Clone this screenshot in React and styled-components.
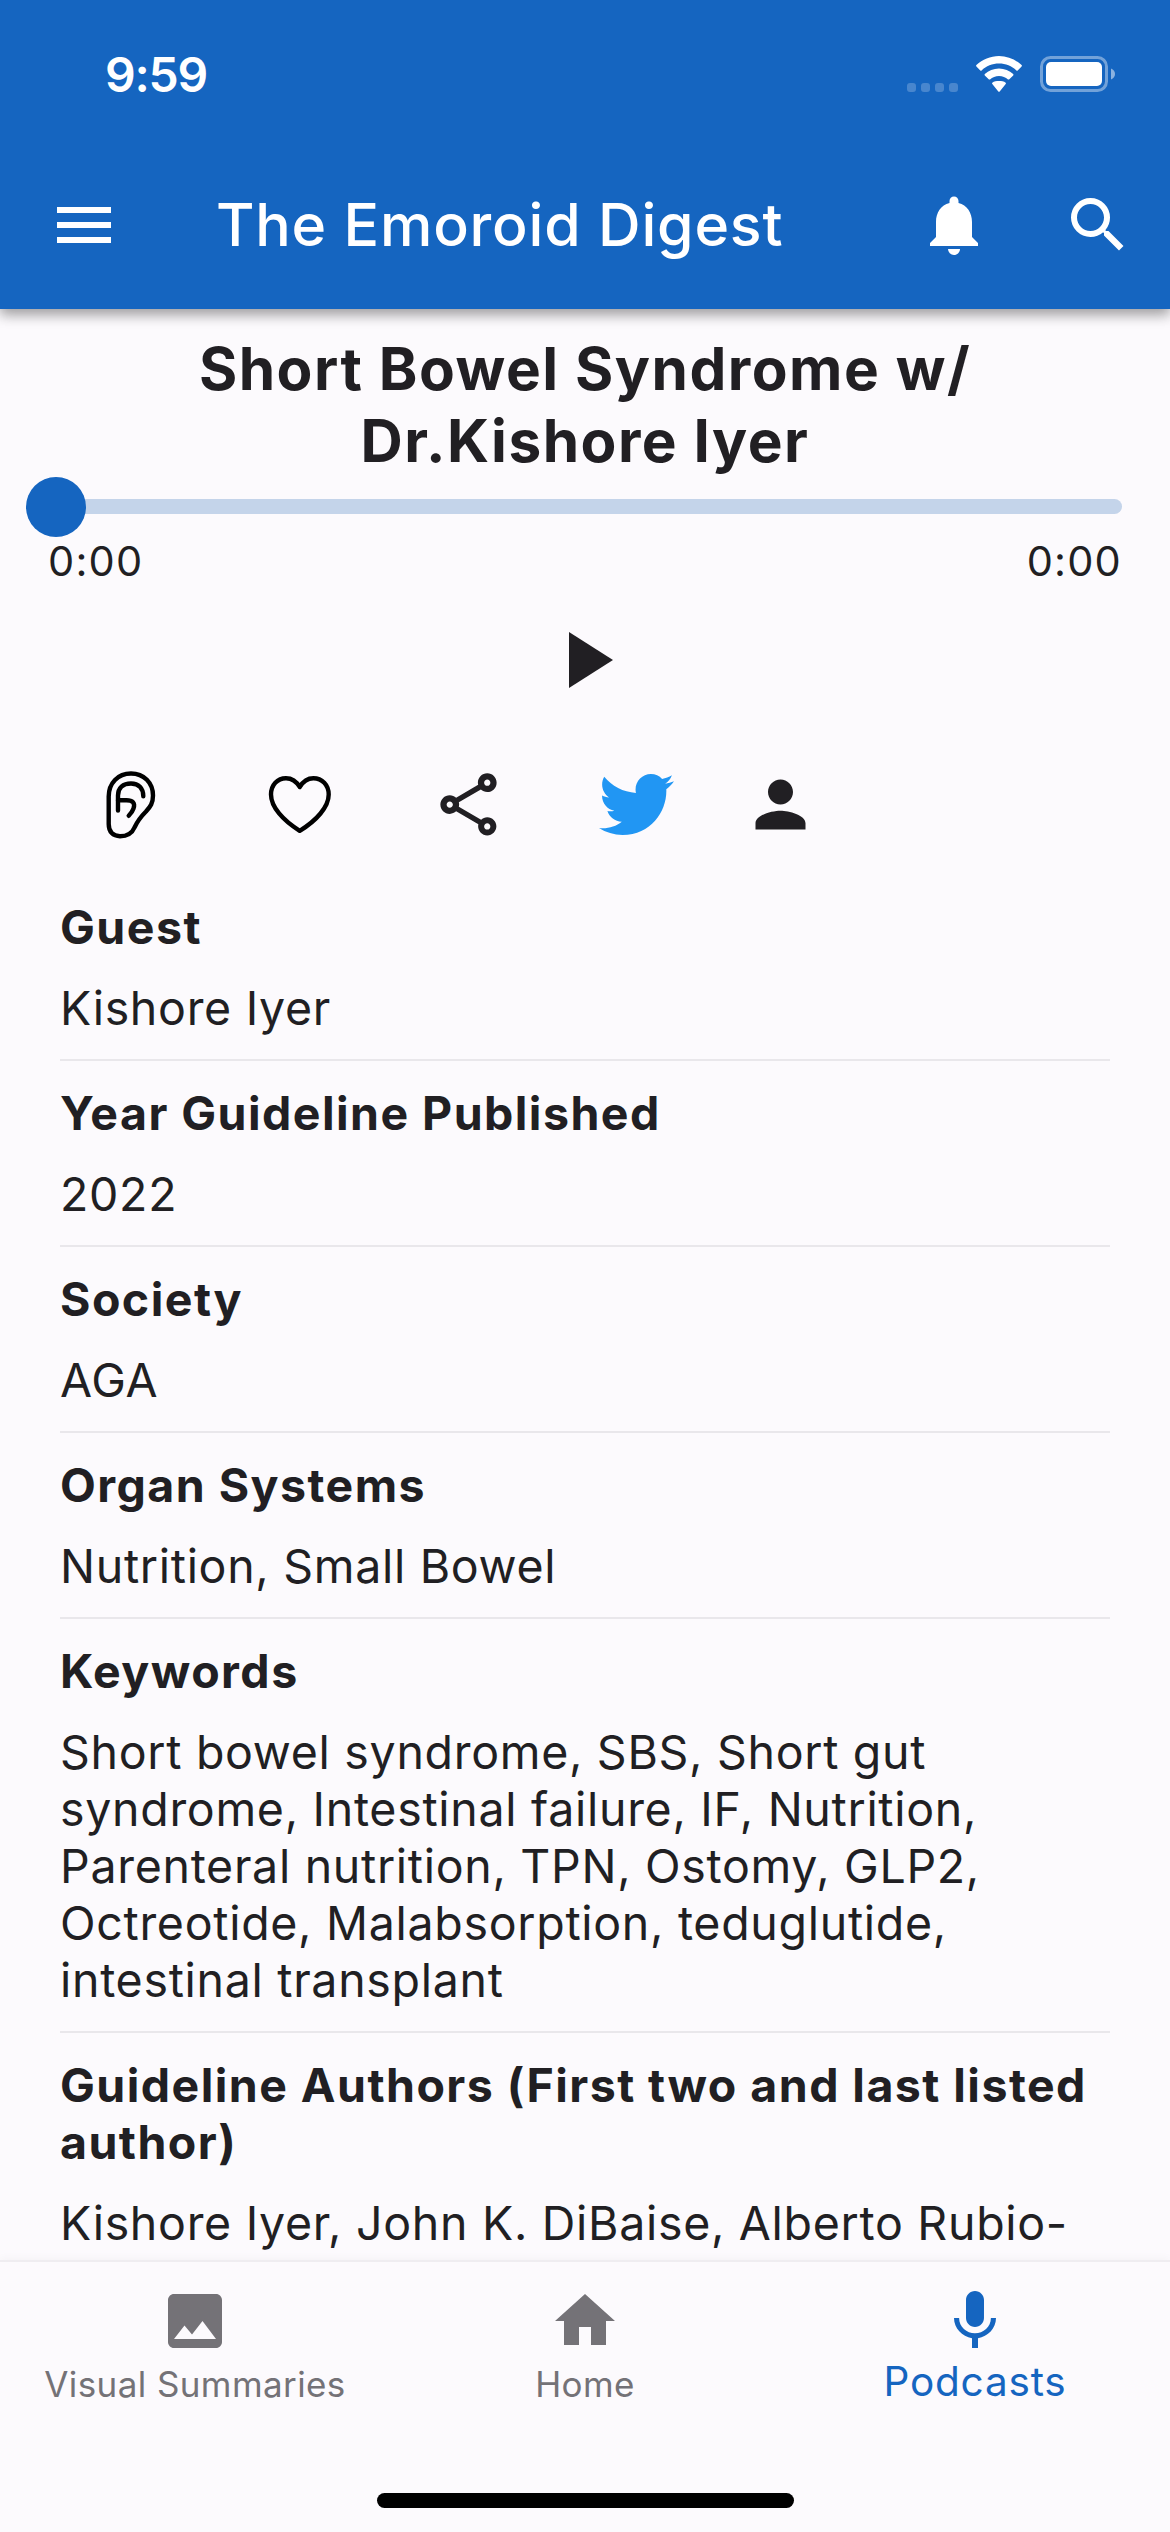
import React, { useState } from 'react'

import styled, { createGlobalStyle } from 'styled-components'

import {
  MdHome,
  MdImage,
  MdMenu,
  MdNotifications,
  MdOutlineShare,
  MdPerson,
  MdPlayArrow,
  MdSearch,
} from 'react-icons/md'
import { FaTwitter } from 'react-icons/fa'


const GlobalStyle = createGlobalStyle`
  * {
    box-sizing: border-box;
  }
  body {
    margin: 0;
    background-color: #fcfafd;
    color: #211f23;
    font-family: Inter, "Liberation Sans", sans-serif;
  }
  button {
    border: none;
    padding: 0;
    background: none;
    color: inherit;
    font: inherit;
  }
  svg {
    display: block;
    flex-shrink: 0;
  }
`

const Screen = styled.div`
  display: flex;
  flex-direction: column;
  width: 1170px;
  height: 2532px;
  overflow: hidden;
`

const Header = styled.header`
  flex-shrink: 0;
  height: 309px;
  background-color: #1565c0;
  color: white;
  box-shadow: 0 6px 12px rgba(0, 0, 0, 0.3), 0 3px 15px rgba(0, 0, 0, 0.12);
  z-index: 1;
`

const StatusBar = styled.div`
  display: flex;
  align-items: center;
  justify-content: space-between;
  height: 141px;
  padding: 7px 55px 0 105px;
`

const Clock = styled.span`
  font-size: 48px;
  font-weight: 600;
  letter-spacing: -1.2px;
`

const StatusIcons = styled.div`
  display: flex;
  align-items: center;
  gap: 17px;
`

const SignalDots = styled.div`
  display: flex;
  gap: 5px;
  margin-top: 26px;
`

const Dot = styled.i`
  width: 9px;
  height: 9px;
  border-radius: 3px;
  background-color: rgba(255, 255, 255, 0.22);
`

const AppBar = styled.div`
  display: flex;
  align-items: center;
  height: 168px;
  padding: 0 36px 0 48px;
`

const AppTitle = styled.h1`
  flex: 1;
  margin: 0 0 0 96px;
  font-size: 59px;
  font-weight: 500;
  line-height: 72px;
  letter-spacing: 0.8px;
  white-space: nowrap;
`

const AppBarActions = styled.div`
  display: flex;
  gap: 72px;
`

const Content = styled.main`
  flex: 1;
  min-height: 0;
  overflow: hidden;
`

const PodcastTitle = styled.h2`
  margin: 24px 150px 0;
  text-align: center;
  font-size: 58.5px;
  font-weight: 700;
  line-height: 72px;
  letter-spacing: 1.5px;
`

const Player = styled.section`
  display: flex;
  flex-direction: column;
  padding: 0 48px;
`

const Track = styled.div`
  display: flex;
  align-items: center;
  height: 15px;
  margin-top: 22px;
  border-radius: 8px;
  background-color: #c4d4ea;
`

const Thumb = styled.div`
  width: 60px;
  height: 60px;
  margin-left: -22px;
  border-radius: 50%;
  background-color: #1565c0;
`

const Times = styled.div`
  display: flex;
  justify-content: space-between;
  margin-top: 22px;
  font-size: 41.5px;
  line-height: 50px;
  letter-spacing: 1.2px;
`

const PlayButton = styled.button`
  align-self: center;
  margin-top: 26px;
`

const Actions = styled.div`
  display: flex;
  gap: 94px;
  margin-top: 59px;
  padding-left: 93px;
`

const ActionButton = styled.button`
  width: 75px;
  height: 75px;
  color: ${props => props.color || "#211f23"};
  &:nth-child(4) {
    margin-left: -1px;
  }
  &:last-child {
    margin-left: -25px;
  }
`

const Details = styled.div`
  padding: 33px 60px 0;
`

const Detail = styled.section`
  padding: 24px 0 22px;
  border-bottom: 2px solid #e9e7eb;
`

const DetailTitle = styled.h3`
  margin: 0 0 24px;
  font-size: 46.5px;
  font-weight: 700;
  line-height: 57px;
  letter-spacing: 1.45px;
`

const DetailText = styled.p`
  margin: 0;
  font-size: 46.5px;
  line-height: 57px;
  letter-spacing: 0.7px;
`

const BottomNav = styled.nav`
  flex-shrink: 0;
  display: grid;
  grid-template-columns: repeat(3, 1fr);
  height: 272px;
  padding-top: 23px;
  border-top: 2px solid #efedf1;
  background-color: #fcfafd;
  box-shadow: 0 -2px 8px rgba(0, 0, 0, 0.03);
`

const NavItem = styled.button`
  display: flex;
  flex-direction: column;
  align-items: center;
  height: 130px;
  color: ${props => props.$active ? "#1565c0" : "#747277"};
  font-size: ${props => props.$active ? "40.5px" : "35px"};
  letter-spacing: ${props => props.$active ? "0.8px" : "0.4px"};
`

const NavLabel = styled.span`
  line-height: 50px;
  margin-top: ${props => props.$active ? "0" : "2px"};
  white-space: nowrap;
`

const HomeIndicator = styled.div`
  grid-column: 1 / -1;
  justify-self: center;
  align-self: end;
  width: 417px;
  height: 15px;
  margin-bottom: 24px;
  border-radius: 8px;
  background-color: black;
`

const WifiIcon = () => (
  <svg width="48" height="36" viewBox="0 0 48 36" fill="currentColor">
    <path d="M24 7.5c6.7 0 12.8 2.6 17.4 6.9.4.4 1 .4 1.3 0l3.9-3.9c.4-.4.4-1 0-1.4C40.5 3.5 32.6 0 24 0S7.5 3.5 1.4 9.1c-.4.4-.4 1 0 1.4l3.9 3.9c.3.4.9.4 1.3 0C11.2 10.1 17.3 7.5 24 7.5z" />
    <path d="M24 20c3.5 0 6.6 1.3 9 3.4.4.3 1 .3 1.3-.1l3.9-3.9c.4-.4.4-1 0-1.4-3.8-3.4-8.7-5.5-14.2-5.5S13.6 14.6 9.8 18c-.4.4-.4 1 0 1.4l3.9 3.9c.3.4.9.4 1.3.1 2.4-2.1 5.5-3.4 9-3.4z" />
    <path d="M30.7 28c.4-.4.4-1 0-1.3C28.9 25.2 26.5 25 24 25s-4.900.2-6.700 1.700c-.4.3-.4.9 0 1.300l6 7.500c.4.4 1 .4 1.400 0z" />
  </svg>
)

const BatteryIcon = () => (
  <svg width="75" height="36" viewBox="0 0 75 36">
    <rect x="1.5" y="1.5" width="65" height="33" rx="9" fill="none" stroke="white" strokeOpacity="0.4" strokeWidth="3" />
    <rect x="6" y="6" width="56" height="24" rx="5" fill="white" />
    <path d="M71 12.5c2.6 1 4 3 4 5.5s-1.4 4.5-4 5.5z" fill="white" fillOpacity="0.5" />
  </svg>
)

const EarIcon = () => (
  <svg width="75" height="75" viewBox="0 0 75 75" fill="none" stroke="black" strokeWidth="4.4" strokeLinecap="round">
    <path d="M15.7 57V29.5C15.7 16 25 6.5 38 6.5S60 16 60 28.5c0 7.5-2.5 11-7 16-6.5 6.5-8.5 9.5-11.5 16-2.5 6-7.5 8.7-14.5 8.7S15.7 65 15.7 57z" />
    <path d="M25 43.5v-15c0-7.5 5-12 13-12 7.5 0 12.3 4.5 12.3 12.8" />
    <path d="M25 33.3h8.5c6 0 9 2.7 7 8.2-1 3-2.5 5-4.8 7.3" />
  </svg>
)

const HeartIcon = () => (
  <svg width="75" height="75" viewBox="0 0 75 75" fill="none" stroke="black" strokeWidth="4.4" strokeLinejoin="round">
    <path d="M37.7 20C34.5 14.5 30 11.2 24 11.2 15.5 11.2 9 17.8 9 27.5 9 40 21 53.5 37.7 63.8 54.5 53.5 66.7 40 66.7 27.5c0-9.7-6.7-16.3-15.3-16.3-5.9 0-10.4 3.3-13.7 8.8z" />
  </svg>
)

const MicIcon = () => (
  <svg width="72" height="72" viewBox="0 0 24 24" fill="currentColor">
    <path d="M12 14c1.66 0 2.99-1.34 2.99-3L15 5c0-1.66-1.34-3-3-3S9 3.34 9 5v6c0 1.66 1.34 3 3 3zm5.3-3c0 3-2.54 5.1-5.3 5.1S6.7 14 6.7 11H5c0 3.41 2.72 6.23 6 6.72V21h2v-3.28c3.28-.48 6-3.3 6-6.72h-1.7z" />
  </svg>
)

const details = [
  { title: "Guest", text: "Kishore Iyer" },
  { title: "Year Guideline Published", text: "2022" },
  { title: "Society", text: "AGA" },
  { title: "Organ Systems", text: "Nutrition, Small Bowel" },
  {
    title: "Keywords",
    text: "Short bowel syndrome, SBS, Short gut syndrome, Intestinal failure, IF, Nutrition, Parenteral nutrition, TPN, Ostomy, GLP2, Octreotide, Malabsorption, teduglutide, intestinal transplant",
  },
  {
    title: "Guideline Authors (First two and last listed author)",
    text: "Kishore Iyer, John K. DiBaise, Alberto Rubio-",
  },
]

const tabs = [
  { label: "Visual Summaries", icon: <MdImage size={72} /> },
  { label: "Home", icon: <MdHome size={72} /> },
  { label: "Podcasts", icon: <MicIcon /> },
]

const App = () => {
  const [activeTab, setActiveTab] = useState("Podcasts")

  return (
    <Screen>
      <GlobalStyle />
      <Header>
        <StatusBar>
          <Clock>9:59</Clock>
          <StatusIcons>
            <SignalDots>
              <Dot /><Dot /><Dot /><Dot />
            </SignalDots>
            <WifiIcon />
            <BatteryIcon />
          </StatusIcons>
        </StatusBar>
        <AppBar>
          <MdMenu size={72} />
          <AppTitle>The Emoroid Digest</AppTitle>
          <AppBarActions>
            <MdNotifications size={72} />
            <MdSearch size={72} />
          </AppBarActions>
        </AppBar>
      </Header>

      <Content>
        <PodcastTitle>Short Bowel Syndrome w/ Dr.Kishore Iyer</PodcastTitle>
        <Player>
          <Track>
            <Thumb />
          </Track>
          <Times>
            <span>0:00</span>
            <span>0:00</span>
          </Times>
          <PlayButton>
            <MdPlayArrow size={96} />
          </PlayButton>
        </Player>
        <Actions>
          <ActionButton><EarIcon /></ActionButton>
          <ActionButton><HeartIcon /></ActionButton>
          <ActionButton><MdOutlineShare size={75} /></ActionButton>
          <ActionButton color="#2196f3"><FaTwitter size={75} /></ActionButton>
          <ActionButton><MdPerson size={75} /></ActionButton>
        </Actions>
        <Details>
          {details.map(item => (
            <Detail key={item.title}>
              <DetailTitle>{item.title}</DetailTitle>
              <DetailText>{item.text}</DetailText>
            </Detail>
          ))}
        </Details>
      </Content>

      <BottomNav>
        {tabs.map(tab => {
          const active = tab.label === activeTab
          return (
            <NavItem key={tab.label} $active={active} onClick={() => setActiveTab(tab.label)}>
              {tab.icon}
              <NavLabel $active={active}>{tab.label}</NavLabel>
            </NavItem>
          )
        })}
        <HomeIndicator />
      </BottomNav>
    </Screen>
  )
}

export default App
